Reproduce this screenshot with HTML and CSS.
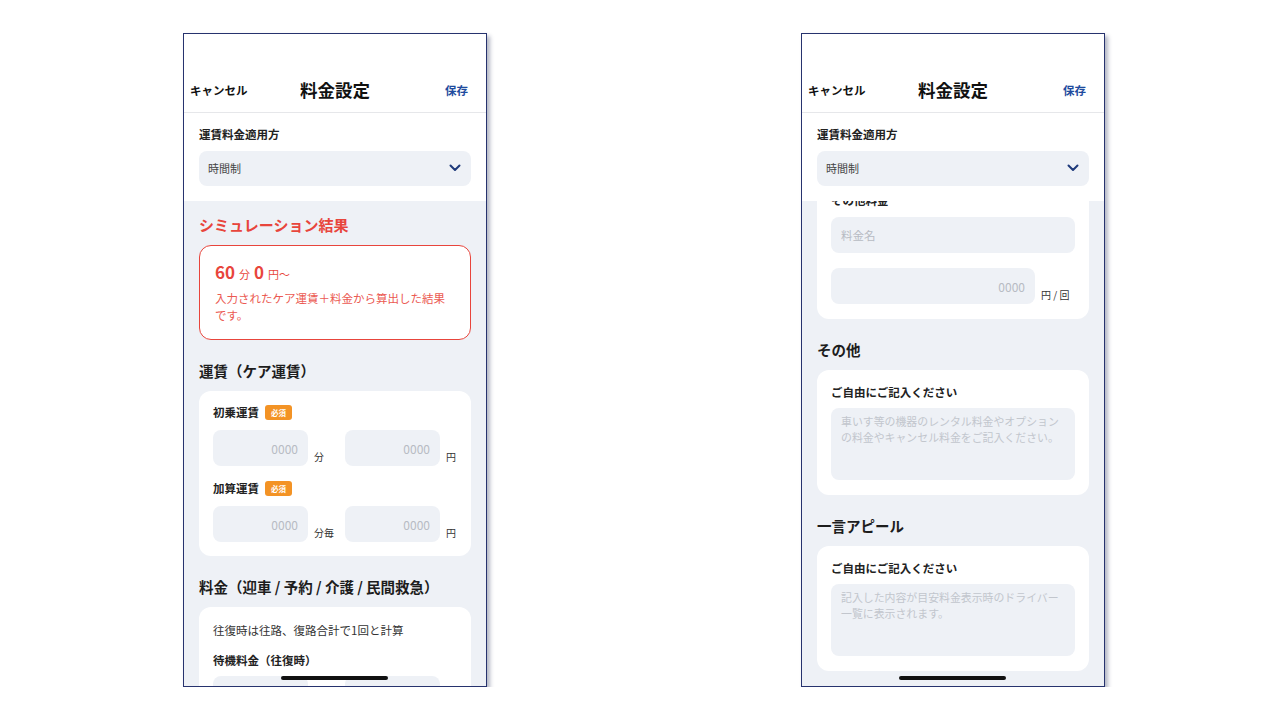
FILE: index.html
```html
<!DOCTYPE html>
<html lang="ja">
  <head>
    <meta charset="UTF-8" />
    <meta name="viewport" content="width=device-width, initial-scale=1.0" />
    <title>料金設定</title>
    <link rel="stylesheet" href="styles.css">
  </head>
  <body>
    <div class="screens">
      <!-- left: top of the form -->
      <div class="phone">
        <div class="top">
          <div class="status"></div>
          <div class="nav">
            <span class="nav-cancel">キャンセル</span>
            <span class="nav-title">料金設定</span>
            <span class="nav-save">保存</span>
          </div>
          <div class="method">
            <div class="method-label">運賃料金適用方</div>
            <div class="select">
              <span>時間制</span>
              <svg width="12" height="8" viewBox="0 0 12 8"><path d="M1.5 1.5 L6 6 L10.5 1.5" fill="none" stroke="#1e3a7b" stroke-width="2" stroke-linecap="round" stroke-linejoin="round"/></svg>
            </div>
          </div>
        </div>

        <div class="scroll">
          <h2 class="sim-title">シミュレーション結果</h2>
          <div class="sim-box">
            <div class="sim-value">
              <b>60</b><small>分</small><b>0</b><small>円〜</small>
            </div>
            <p class="sim-note">入力されたケア運賃＋料金から算出した結果です。</p>
          </div>

          <h2 class="section-title">運賃（ケア運賃）</h2>
          <div class="card">
            <div class="field-label">初乗運賃 <span class="badge">必須</span></div>
            <div class="field-row">
              <div class="pair">
                <div class="input num">0000</div>
                <span class="unit">分</span>
              </div>
              <div class="pair">
                <div class="input num">0000</div>
                <span class="unit">円</span>
              </div>
            </div>
            <div class="field-label next">加算運賃 <span class="badge">必須</span></div>
            <div class="field-row">
              <div class="pair">
                <div class="input num">0000</div>
                <span class="unit">分毎</span>
              </div>
              <div class="pair">
                <div class="input num">0000</div>
                <span class="unit">円</span>
              </div>
            </div>
          </div>

          <h2 class="section-title">料金（迎車 / 予約 / 介護 / 民間救急）</h2>
          <div class="card card-fees">
            <p class="card-note">往復時は往路、復路合計で1回と計算</p>
            <div class="field-label wait">待機料金（往復時）</div>
            <div class="field-row">
              <div class="pair">
                <div class="input num"></div>
              </div>
              <div class="pair">
                <div class="input num"></div>
              </div>
            </div>
          </div>
        </div>
        <div class="home-bar"></div>
      </div>

      <!-- right: scrolled to the bottom -->
      <div class="phone">
        <div class="top">
          <div class="status"></div>
          <div class="nav">
            <span class="nav-cancel">キャンセル</span>
            <span class="nav-title">料金設定</span>
            <span class="nav-save">保存</span>
          </div>
          <div class="method">
            <div class="method-label">運賃料金適用方</div>
            <div class="select">
              <span>時間制</span>
              <svg width="12" height="8" viewBox="0 0 12 8"><path d="M1.5 1.5 L6 6 L10.5 1.5" fill="none" stroke="#1e3a7b" stroke-width="2" stroke-linecap="round" stroke-linejoin="round"/></svg>
            </div>
          </div>
        </div>

        <div class="scroll">
          <div class="card card-other">
            <div class="field-label">その他料金</div>
            <div class="input text">料金名</div>
            <div class="pair wide">
              <div class="input num">0000</div>
              <span class="unit">円 / 回</span>
            </div>
          </div>

          <h2 class="section-title">その他</h2>
          <div class="card card-free">
            <div class="field-label">ご自由にご記入ください</div>
            <div class="textarea">車いす等の機器のレンタル料金やオプション<br>の料金やキャンセル料金をご記入ください。</div>
          </div>

          <h2 class="section-title">一言アピール</h2>
          <div class="card card-free">
            <div class="field-label">ご自由にご記入ください</div>
            <div class="textarea">記入した内容が目安料金表示時のドライバー<br>一覧に表示されます。</div>
          </div>
        </div>
        <div class="home-bar"></div>
      </div>
    </div>
  </body>
</html>
```

FILE: styles.css
```css
* {
  margin: 0;
  padding: 0;
  box-sizing: border-box;
}
body {
  font-family: "Noto Sans CJK JP", "Noto Sans", sans-serif;
  background: #fff;
  color: #222;
}
.screens {
  display: flex;
  gap: 314px;
  padding: 33px 0 0 183px;
}
.phone {
  position: relative;
  width: 304px;
  height: 654px;
  border: 1px solid #27336e;
  box-shadow: 3px 3px 4px rgba(40, 50, 90, 0.35);
  display: flex;
  flex-direction: column;
  overflow: hidden;
  background: #eef1f6;
}

/* header */
.top {
  background: #fff;
  position: relative;
  z-index: 1;
}
.status {
  height: 33px;
}
.nav {
  height: 46px;
  display: grid;
  grid-template-columns: 1fr auto 1fr;
  align-items: center;
  padding: 0 12px;
  border-bottom: 1px solid #e6e7ea;
}
.nav-cancel {
  font-size: 11.5px;
  font-weight: 700;
  color: #111;
  justify-self: start;
  margin-left: -6px;
}
.nav-title {
  font-size: 17.5px;
  font-weight: 700;
  color: #111;
}
.nav-save {
  font-size: 11.5px;
  font-weight: 700;
  color: #1f4c9e;
  justify-self: end;
  margin-right: 6px;
}
.method {
  padding: 13px 15px 15px;
}
.method-label {
  font-size: 11.5px;
  font-weight: 700;
  line-height: 16px;
  color: #222;
  margin-bottom: 9px;
}
.select {
  height: 35px;
  background: #eef1f6;
  border-radius: 8px;
  display: flex;
  align-items: center;
  justify-content: space-between;
  padding: 0 10px 2px 9px;
  font-size: 11px;
  color: #444;
}

/* scroll area */
.scroll {
  flex: 1;
  overflow: hidden;
  padding: 0 15px;
}
.sim-title {
  font-size: 15px;
  line-height: 20px;
  font-weight: 700;
  color: #e8453c;
  padding: 14px 0 10px;
}
.sim-box {
  background: #fff;
  border: 1.5px solid #e8453c;
  border-radius: 12px;
  padding: 15px 15px 15px;
  color: #e8453c;
}
.sim-value {
  line-height: 22px;
  margin-bottom: 5px;
}
.sim-value b {
  font-size: 17px;
  font-weight: 700;
}
.sim-value small {
  font-size: 11px;
  margin: 0 4px 0 4px;
}
.sim-note {
  font-size: 11.5px;
  line-height: 17px;
  color: #eb5a52;
}
.section-title {
  font-size: 14.5px;
  line-height: 20px;
  font-weight: 700;
  color: #1d1d1d;
  padding: 21px 0 10px;
}
.card {
  background: #fff;
  border-radius: 12px;
  padding: 13px 14px 14px;
}
.field-label {
  font-size: 11.5px;
  font-weight: 700;
  line-height: 16px;
  color: #222;
  display: flex;
  align-items: center;
  gap: 6px;
  margin-bottom: 10px;
}
.field-label.next {
  margin-top: 14px;
}
.badge {
  background: #f39325;
  color: #fff;
  font-size: 7.5px;
  line-height: 15px;
  padding: 0 6px;
  border-radius: 3px;
}
.field-row {
  display: flex;
}
.pair {
  display: flex;
  align-items: flex-end;
  flex: 0 0 132px;
}
.input {
  height: 36px;
  background: #eef1f6;
  border-radius: 8px;
  font-size: 12px;
  color: #b7bbc3;
  display: flex;
  align-items: center;
}
.input.num {
  width: 95px;
  justify-content: flex-end;
  padding-right: 10px;
}
.input.text {
  padding-left: 10px;
  font-size: 11.5px;
}
.unit {
  font-size: 10px;
  line-height: 14px;
  margin: 0 0 2px 6px;
  color: #333;
}
.card-note {
  font-size: 11.5px;
  line-height: 16px;
  color: #333;
  margin-top: 2px;
}
.field-label.wait {
  margin-top: 14px;
  margin-bottom: 8px;
}
.card-other {
  margin-top: -22px;
  padding-bottom: 15px;
}
.card-other .field-label {
  margin-bottom: 9px;
}
.pair.wide {
  margin-top: 15px;
}
.pair.wide .input.num {
  width: 204px;
}
.card-free {
  padding: 14px 14px 15px;
}
.card-free .field-label {
  margin-bottom: 8px;
}
.textarea {
  height: 72px;
  background: #eef1f6;
  border-radius: 8px;
  padding: 6px 8px 6px 10px;
  font-size: 10.9px;
  line-height: 15.5px;
  color: #c2c6cd;
  white-space: nowrap;
}
.home-bar {
  position: absolute;
  left: 50%;
  bottom: 6px;
  width: 107px;
  height: 4px;
  margin-left: -54px;
  border-radius: 2px;
  background: #111;
  z-index: 2;
}
```
